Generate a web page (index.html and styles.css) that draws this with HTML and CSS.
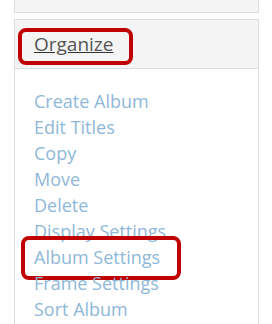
FILE: index.html
```html
<!DOCTYPE html>
<html>
<head>
<meta charset="utf-8">
<link rel="stylesheet" href="styles.css">
</head>
<body>
<div class="wrap">
  <div class="top-box"></div>
  <div class="panel">
    <div class="panel-head">
      <a class="head-link" href="#">Organize</a>
      <span class="callout callout-head"></span>
    </div>
    <ul class="menu">
      <li><a href="#">Create Album</a></li>
      <li><a href="#">Edit Titles</a></li>
      <li><a href="#">Copy</a></li>
      <li><a href="#">Move</a></li>
      <li><a href="#">Delete</a></li>
      <li><a href="#">Display Settings</a></li>
      <li class="marked"><a href="#">Album Settings</a><span class="callout callout-item"></span></li>
      <li><a href="#">Frame Settings</a></li>
      <li><a href="#">Sort Album</a></li>
    </ul>
  </div>
</div>
</body>
</html>
```
FILE: styles.css
```css
html, body {
  margin: 0;
  padding: 0;
  background: #fff;
  overflow: hidden;
}
body {
  font-family: "Open Sans", "Liberation Sans", sans-serif;
  width: 272px;
  height: 324px;
}
.wrap {
  padding-left: 14px;
  width: 245px;
}
.top-box {
  height: 13px;
  background: #f4f4f4;
  border: 1px solid #dddddd;
  border-top: none;
  box-sizing: border-box;
}
.panel {
  margin-top: 6px;
  border: 1px solid #dddddd;
  border-bottom: none;
  height: 400px;
}
.panel-head {
  position: relative;
  height: 48px;
  background: #f4f4f4;
  border-bottom: 1px solid #dddddd;
  padding-left: 19px;
  box-sizing: content-box;
}
.head-link {
  display: inline-block;
  font-size: 19px;
  line-height: 26px;
  padding-top: 11px;
  color: #555555;
  text-decoration: underline;
  text-decoration-color: #333333;
}
.callout {
  position: absolute;
  border: 4px solid #c00000;
  border-radius: 8px;
  box-sizing: border-box;
}
.callout-head {
  left: 3px;
  top: 8px;
  width: 115px;
  height: 37px;
}
.menu {
  list-style: none;
  margin: 0;
  padding: 19px 0 0 19px;
}
.menu li {
  position: relative;
  font-size: 18px;
  line-height: 26px;
}
.menu a {
  color: #8fb8d8;
  text-decoration: none;
}
.callout-item {
  left: -13px;
  top: -8px;
  width: 160px;
  height: 44px;
}
```
